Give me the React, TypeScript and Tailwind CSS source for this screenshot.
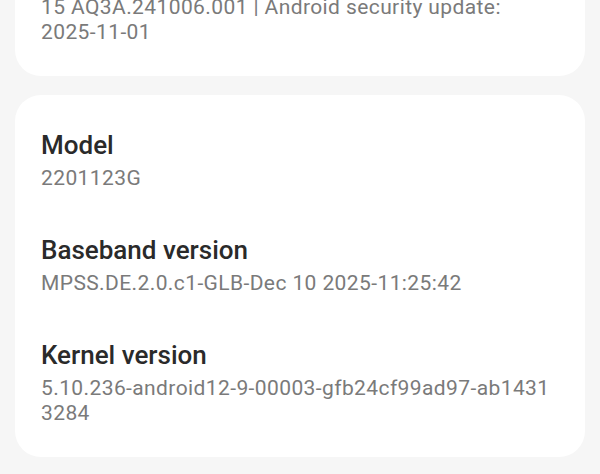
import * as React from 'react';

interface Spec {
  title: string;
  value: React.ReactNode;
  breakAll?: boolean;
}

const buildSpec: Spec = {
  title: 'Build number',
  value: (
    <>
      15 AQ3A.241006.001 | Android security update: <span className="whitespace-nowrap">2025-11-01</span>
    </>
  ),
};

const specs: Spec[] = [
  { title: 'Model', value: '2201123G' },
  { title: 'Baseband version', value: 'MPSS.DE.2.0.c1-GLB-Dec 10 2025-11:25:42' },
  { title: 'Kernel version', value: '5.10.236-android12-9-00003-gfb24cf99ad97-ab14313284', breakAll: true },
];

function SpecRow({ spec }: { spec: Spec }) {
  return (
    <div className="pl-[26px] pr-[30px] py-[21px]">
      <div className="text-[26px] leading-[34px] font-medium text-[#2a2a2a]">{spec.title}</div>
      <div
        className={`mt-[4px] text-[21px] leading-[25px] tracking-[0.4px] text-[#7a7a7a] ${
          spec.breakAll ? 'break-all' : ''
        }`}
      >
        {spec.value}
      </div>
    </div>
  );
}

export default function App() {
  return (
    <div
      className="w-[600px] h-[474px] overflow-hidden bg-[#f6f6f6]"
      style={{ fontFamily: 'Roboto, "Noto Sans", sans-serif' }}
    >
      <div className="flex flex-col gap-[19px] px-[15px] mt-[-76px]">
        <div className="bg-white rounded-[26px] pt-[12px] pb-[10px]">
          <SpecRow spec={buildSpec} />
        </div>
        <div className="bg-white rounded-[26px] pt-[12px] pb-[10px]">
          {specs.map((s) => (
            <SpecRow key={s.title} spec={s} />
          ))}
        </div>
      </div>
    </div>
  );
}
